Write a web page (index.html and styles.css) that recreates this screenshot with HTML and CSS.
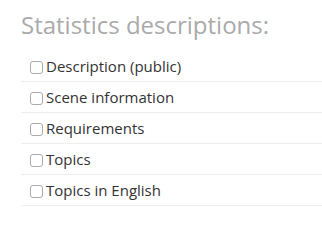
FILE: index.html
```html
<!DOCTYPE html>
<html lang="en">
  <head>
    <meta charset="UTF-8" />
    <meta name="viewport" content="width=device-width, initial-scale=1.0" />
    <link rel="stylesheet" href="styles.css">
    <title>Statistics descriptions</title>
  </head>
  <body>
    <div class="panel">
      <h3 class="title">Statistics descriptions:</h3>
      <ul class="options">
        <li><label><input type="checkbox"> Description (public)</label></li>
        <li><label><input type="checkbox"> Scene information</label></li>
        <li><label><input type="checkbox"> Requirements</label></li>
        <li><label><input type="checkbox"> Topics</label></li>
        <li><label><input type="checkbox"> Topics in English</label></li>
      </ul>
    </div>
  </body>
</html>
```

FILE: styles.css
```css
body {
  font-family: "Open Sans", sans-serif;
  margin: 0;
  background-color: #fff;
  color: #333;
}

.panel {
  padding: 8px 0 0 21px;
}

.title {
  margin: 0 0 9px 0;
  font-size: 24px;
  font-weight: 400;
  line-height: 34px;
  color: #aaa;
}

.options {
  list-style: none;
  margin: 0;
  padding: 0;
}

.options li {
  height: 30px;
  border-bottom: 1px solid #eee;
  display: flex;
  align-items: center;
  font-size: 15px;
}

.options label {
  display: flex;
  align-items: center;
  padding-left: 6px;
}

.options input {
  appearance: none;
  box-sizing: border-box;
  margin: 2px 3px 0 3px;
  width: 13px;
  height: 13px;
  border: 1px solid #aaa;
  border-radius: 3px;
  background-color: #fff;
}
```
